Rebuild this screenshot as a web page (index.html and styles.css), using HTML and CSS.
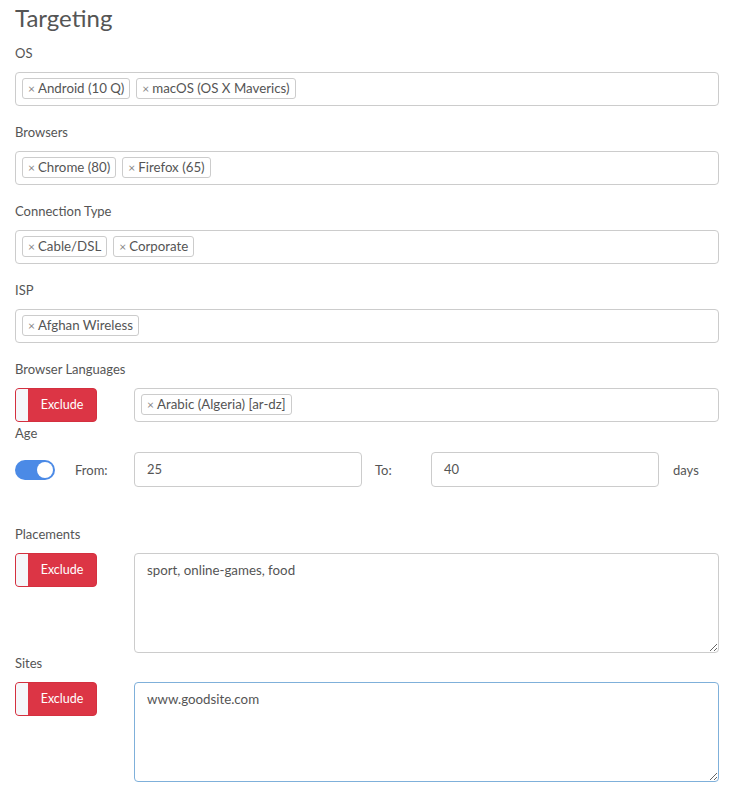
FILE: index.html
```html
<!DOCTYPE html>
<html>
<head>
<meta charset="utf-8">
<link rel="stylesheet" href="styles.css">
</head>
<body>
<div class="page">
  <h2 class="title">Targeting</h2>

  <div class="field">
    <div class="label">OS</div>
    <div class="tagbox">
      <span class="tag"><span class="x">×</span>Android (10 Q)</span>
      <span class="tag"><span class="x">×</span>macOS (OS X Maverics)</span>
    </div>
  </div>

  <div class="field">
    <div class="label">Browsers</div>
    <div class="tagbox">
      <span class="tag"><span class="x">×</span>Chrome (80)</span>
      <span class="tag"><span class="x">×</span>Firefox (65)</span>
    </div>
  </div>

  <div class="field">
    <div class="label">Connection Type</div>
    <div class="tagbox">
      <span class="tag"><span class="x">×</span>Cable/DSL</span>
      <span class="tag"><span class="x">×</span>Corporate</span>
    </div>
  </div>

  <div class="field">
    <div class="label">ISP</div>
    <div class="tagbox">
      <span class="tag"><span class="x">×</span>Afghan Wireless</span>
    </div>
  </div>

  <div class="field tight">
    <div class="label">Browser Languages</div>
    <div class="row">
      <div class="exclude"><span class="knob"></span><span class="ex-text">Exclude</span></div>
      <div class="tagbox grow">
        <span class="tag"><span class="x">×</span>Arabic (Algeria) [ar-dz]</span>
      </div>
    </div>
  </div>

  <div class="field age">
    <div class="label age-label">Age</div>
    <div class="row center">
      <div class="switch-cell"><span class="switch"><span class="switch-knob"></span></span></div>
      <span class="from">From:</span>
      <div class="input num">25</div>
      <span class="to">To:</span>
      <div class="input num">40</div>
      <span class="days">days</span>
    </div>
  </div>

  <div class="field tight">
    <div class="label">Placements</div>
    <div class="row">
      <div class="exclude"><span class="knob"></span><span class="ex-text">Exclude</span></div>
      <textarea class="area">sport, online-games, food</textarea>
    </div>
  </div>

  <div class="field tight">
    <div class="label">Sites</div>
    <div class="row">
      <div class="exclude"><span class="knob"></span><span class="ex-text">Exclude</span></div>
      <textarea class="area focused">www.goodsite.com</textarea>
    </div>
  </div>
</div>
</body>
</html>
```
FILE: styles.css
```css
* { box-sizing: border-box; }
body {
  margin: 0;
  background: #fff;
  font-family: "Lato", "Open Sans", sans-serif;
  color: #555;
  font-size: 13px;
}
.page {
  padding: 3px 13px 0 15px;
  width: 732px;
}
.title {
  margin: 0 0 10px;
  font-size: 24px;
  line-height: 30px;
  font-weight: 400;
  color: #555;
}
.field {
  margin-bottom: 16px;
}
.field.tight { margin-bottom: 0; }
.field.age { margin-bottom: 37px; }
.label {
  line-height: 20px;
  height: 20px;
  margin-bottom: 9px;
  color: #555;
}
.age-label { margin-top: 1px; }
.tagbox {
  height: 34px;
  border: 1px solid #ccc;
  border-radius: 4px;
  padding: 5px 6px;
  display: flex;
  gap: 6px;
  align-items: flex-start;
  background: #fff;
}
.tagbox.grow { flex: 1; }
.tag {
  height: 21px;
  line-height: 19px;
  border: 1px solid #ccc;
  border-radius: 3px;
  padding: 0 5px 0 5px;
  font-size: 13.3px;
  color: #555;
  white-space: nowrap;
}
.tag .x {
  color: #888;
  margin-right: 3px;
  font-size: 12px;
}
.row {
  display: flex;
  align-items: flex-start;
}
.row.center { align-items: center; }
.exclude {
  width: 82px;
  height: 34px;
  background: #dc3545;
  border: 1px solid #d4303f;
  border-radius: 4px;
  display: flex;
  margin-right: 37px;
  flex-shrink: 0;
}
.knob {
  width: 12px;
  height: 100%;
  background: #f5f7fa;
  border-radius: 3px 0 0 3px;
}
.ex-text {
  flex: 1;
  color: #fff;
  font-size: 12.5px;
  line-height: 32px;
  text-align: center;
}
.switch-cell {
  width: 60px;
  display: flex;
  align-items: center;
}
.switch {
  width: 40px;
  height: 20px;
  border-radius: 10px;
  background: #4b8ae6;
  position: relative;
  display: block;
}
.switch-knob {
  position: absolute;
  right: 2px;
  top: 2px;
  width: 16px;
  height: 16px;
  border-radius: 50%;
  background: #fff;
}
.from { width: 59px; }
.to { width: 56px; margin-left: 13px; }
.days { margin-left: 14px; }
.input {
  width: 228px;
  height: 35px;
  border: 1px solid #ccc;
  border-radius: 4px;
  padding: 0 12px;
  line-height: 33px;
  color: #555;
}
.area {
  flex: 1;
  height: 100px;
  border: 1px solid #ccc;
  border-radius: 4px;
  padding: 6px 12px;
  font-family: "Lato", "Open Sans", sans-serif;
  font-size: 13.3px;
  color: #555;
  line-height: 20px;
  margin: 0;
  display: block;
}
.area.focused {
  border-color: #7fb0da;
  height: 100px;
}
```
